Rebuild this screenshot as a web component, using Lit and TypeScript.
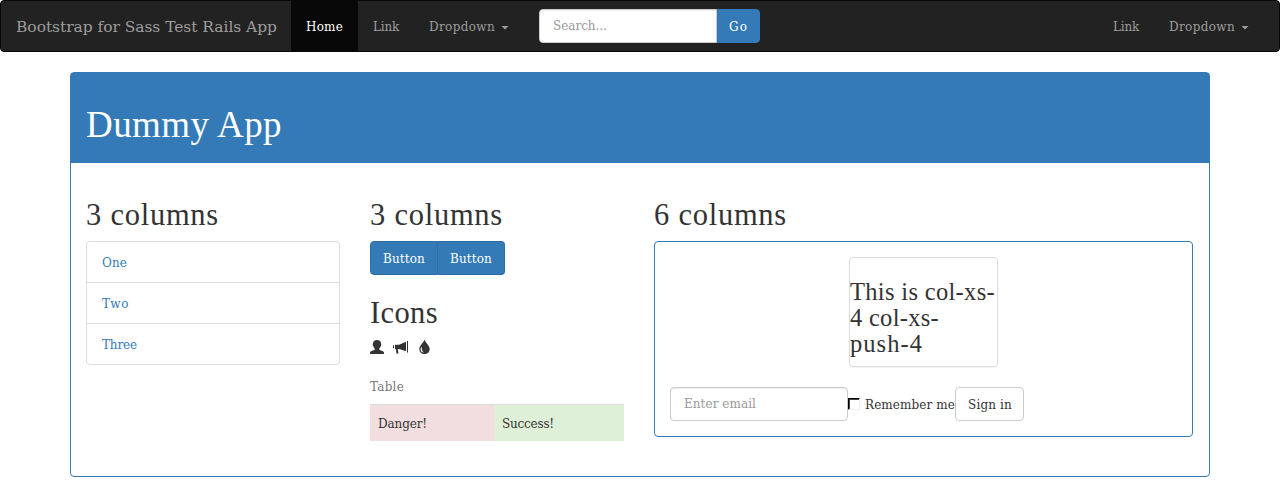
import { LitElement, html, css } from "lit";
import { customElement, property, state } from "lit/decorators.js";

/** A single run of text tracked out to a set measure. */
@customElement("fit-text")
class FitText extends LitElement {
  @property({ type: Number }) measure = 0;
  @property() text = "";
  @state() private tracking = 0;

  static styles = css`
    :host { display: inline-block; white-space: nowrap; }
    .run {
      display: inline-block;
      margin-top: var(--drop, 0px);
      margin-bottom: calc(0px - var(--drop, 0px));
    }
  `;

  firstUpdated() {
    const run = this.renderRoot.querySelector(".run") as HTMLElement;
    const natural = run.getBoundingClientRect().width;
    this.tracking = (this.measure - natural) / this.text.length;
  }

  render() {
    return html`<span class="run" style="letter-spacing:${this.tracking}px">${this.text}</span>`;
  }
}

const t = (text: string, measure: number) =>
  html`<fit-text .text=${text} .measure=${measure}></fit-text>`;

@customElement("app-root")
class AppRoot extends LitElement {
  static styles = css`
    :host {
      --drop: 1px;
      display: block;
      height: 497px;
      overflow: hidden;
      background: #fff;
      color: #333;
      font: 12px/20px "DejaVu Serif", serif;
    }
    * { box-sizing: border-box; }
    h1, h2, h3, ul, p { margin: 0; padding: 0; font-weight: 400; }
    h1, h2, h3 { font-family: "Liberation Serif", serif; }
    h3 { --drop: 0px; }
    a { color: inherit; text-decoration: none; }
    .navbar {
      display: flex;
      height: 52px;
      margin-bottom: 20px;
      background: #222;
      border: 1px solid #080808;
      border-radius: 4px;
      color: #9d9d9d;
    }
    .brand { width: 290px; padding: 15px; font-size: 15.5px; }
    .item { padding: 15px; white-space: nowrap; }
    .home { width: 67px; background: #080808; color: #fff; }
    .link { width: 56px; }
    .drop { width: 110px; display: flex; align-items: center; gap: 6px; }
    .caret {
      width: 8px;
      height: 4px;
      margin-top: 3px;
      background: currentColor;
      clip-path: polygon(0 0, 100% 0, 50% 100%);
    }
    .search { display: flex; padding: 8px 15px; }
    .right { display: flex; margin-left: auto; margin-right: 15px; }
    .control {
      width: 178px;
      height: 34px;
      padding: 5px 13px;
      background: #fff;
      border: 1px solid #ccc;
      border-radius: 4px;
      box-shadow: inset 0 1px 1px rgba(0, 0, 0, 0.075);
      color: #999;
    }
    .search .control { border-radius: 4px 0 0 4px; }
    .btn {
      height: 34px;
      padding: 6px 12px;
      background: #337ab7;
      border: 1px solid #2e6da4;
      border-radius: 4px;
      color: #fff;
      font: inherit;
      text-align: left;
      white-space: nowrap;
    }
    .go { width: 43px; padding-left: 11px; border-radius: 0 4px 4px 0; border-color: #337ab7; }
    .panel {
      width: 1140px;
      height: 405px;
      margin: 0 auto;
      border: 1px solid #337ab7;
      border-radius: 4px;
    }
    .head { height: 90px; padding: 31px 15px 0; background: #337ab7; color: #fff; }
    h1 { font-size: 37px; line-height: 40px; }
    h2 { height: 33px; font-size: 30.5px; line-height: 33px; margin-bottom: 10px; }
    .row { display: grid; grid-template-columns: 254px 254px 539px; gap: 30px; padding: 35px 15px 0; }
    .list { border: 1px solid #ddd; border-radius: 4px; list-style: none; color: #337ab7; }
    .list li { height: 41px; padding: 10px 15px; }
    .list li:first-child { height: 40px; }
    .list li + li { border-top: 1px solid #ddd; }
    .group { display: flex; margin-bottom: 20px; }
    .group + h2 { padding-top: 1px; }
    .first { width: 68px; border-radius: 4px 0 0 4px; }
    .second { width: 67px; border-left-width: 0; border-radius: 0 4px 4px 0; }
    .icons { display: flex; height: 20px; padding-top: 2px; gap: 9px; margin-bottom: 10px; }
    .icon { width: 15px; height: 14px; fill: #333; display: block; overflow: visible; }
    .user { width: 14px; }
    .caption { height: 36px; padding: 8px 0; color: #777; }
    .cells { display: grid; grid-template-columns: 124px 130px; border-top: 1px solid #ddd; }
    .cells span { height: 36px; padding: 8px; }
    .danger { background: #f2dede; }
    .success { background: #dff0d8; }
    .inner { height: 196px; padding: 15px; border: 1px solid #337ab7; border-radius: 4px; }
    .box {
      width: 149px;
      height: 110px;
      margin: 0 0 20px 179px;
      padding-top: 21px;
      border: 1px solid #ddd;
      border-radius: 4px;
      box-shadow: 0 1px 1px rgba(0, 0, 0, 0.05);
    }
    h3 { font-size: 24.5px; line-height: 26px; }
    h3 fit-text { display: block; }
    .form { display: flex; }
    .check { display: flex; align-items: center; width: 107px; gap: 5px; }
    .tick {
      width: 12px;
      height: 12px;
      border: 1px solid #eee;
      border-top-color: #000;
      border-left-color: #000;
      box-shadow: inset 1px 1px 0 #444;
    }
    .sign { width: 69px; background: #fff; border-color: #ccc; color: #333; }
  `;

  private link() {
    return html`<a class="item link">${t("Link", 26)}</a>`;
  }

  private dropdown() {
    return html`<a class="item drop">${t("Dropdown", 66)}<span class="caret"></span></a>`;
  }

  render() {
    return html`
      <nav class="navbar">
        <a class="brand">${t("Bootstrap for Sass Test Rails App", 261)}</a>
        <a class="item home">${t("Home", 37)}</a>
        ${this.link()} ${this.dropdown()}
        <div class="search">
          <div class="control">${t("Search...", 54)}</div>
          <button class="btn go">${t("Go", 19)}</button>
        </div>
        <div class="right">${this.link()} ${this.dropdown()}</div>
      </nav>
      <main class="panel">
        <header class="head"><h1>${t("Dummy App", 196)}</h1></header>
        <div class="row">
          <section>
            <h2>${t("3 columns", 133)}</h2>
            <ul class="list">
              <li>${t("One", 25)}</li>
              <li>${t("Two", 27)}</li>
              <li>${t("Three", 35)}</li>
            </ul>
          </section>
          <section>
            <h2>${t("3 columns", 133)}</h2>
            <div class="group">
              <button class="btn first">${t("Button", 42)}</button>
              <button class="btn second">${t("Button", 42)}</button>
            </div>
            <h2>${t("Icons", 68)}</h2>
            <div class="icons">
              <svg class="icon user" viewBox="0 0 14 14">
                <path d="M7 0C4.500 0 3 1.200 3 3.500c0 .7-.3.800-.3 1.500 0 .7.500.9.700 1.500.3 1.100.9 1.600 1.300 2v1.200C4.200 10.500 0 10.700 0 12.700V14h14v-1.300c0-2-4.200-2.200-4.700-3V8.500c.4-.4 1-.9 1.300-2 .2-.6.700-.8.700-1.500s-.3-.8-.3-1.500C11 1.200 9.500 0 7 0z" />
              </svg>
              <svg class="icon" viewBox="0 0 15 14">
                <path d="M14 1h1v11.500h-1zM13 1.700v9.600L7 9.200l-2.200-.1.700 4.300H3.500L2.800 9H2V4.700h4zM0 5.300h1v2.900H0z" />
              </svg>
              <svg class="icon" viewBox="0 0 15 14">
                <path fill-rule="evenodd" d="M7.500-.5C7 2.500 2.300 5.300 2.300 9c0 3 2.300 5 5.200 5s5.200-2 5.200-5C12.700 5.300 8 2.500 7.500-.5zM5 6.700c-.6 2.600.1 4.500 2 5.900-2.400-.3-3.700-1.800-3.400-3.700.1-.8.700-1.600 1.400-2.200z" />
              </svg>
            </div>
            <p class="caption">${t("Table", 34)}</p>
            <div class="cells">
              <span class="danger">${t("Danger!", 49)}</span>
              <span class="success">${t("Success!", 52)}</span>
            </div>
          </section>
          <section>
            <h2>${t("6 columns", 133)}</h2>
            <div class="inner">
              <div class="box">
                <h3>${t("This is col-xs-", 145)}${t("4 col-xs-", 89)}${t("push-4", 73)}</h3>
              </div>
              <div class="form">
                <div class="control">${t("Enter email", 72)}</div>
                <div class="check"><span class="tick"></span>${t("Remember me", 90)}</div>
                <button class="btn sign">${t("Sign in", 44)}</button>
              </div>
            </div>
          </section>
        </div>
      </main>
    `;
  }
}
